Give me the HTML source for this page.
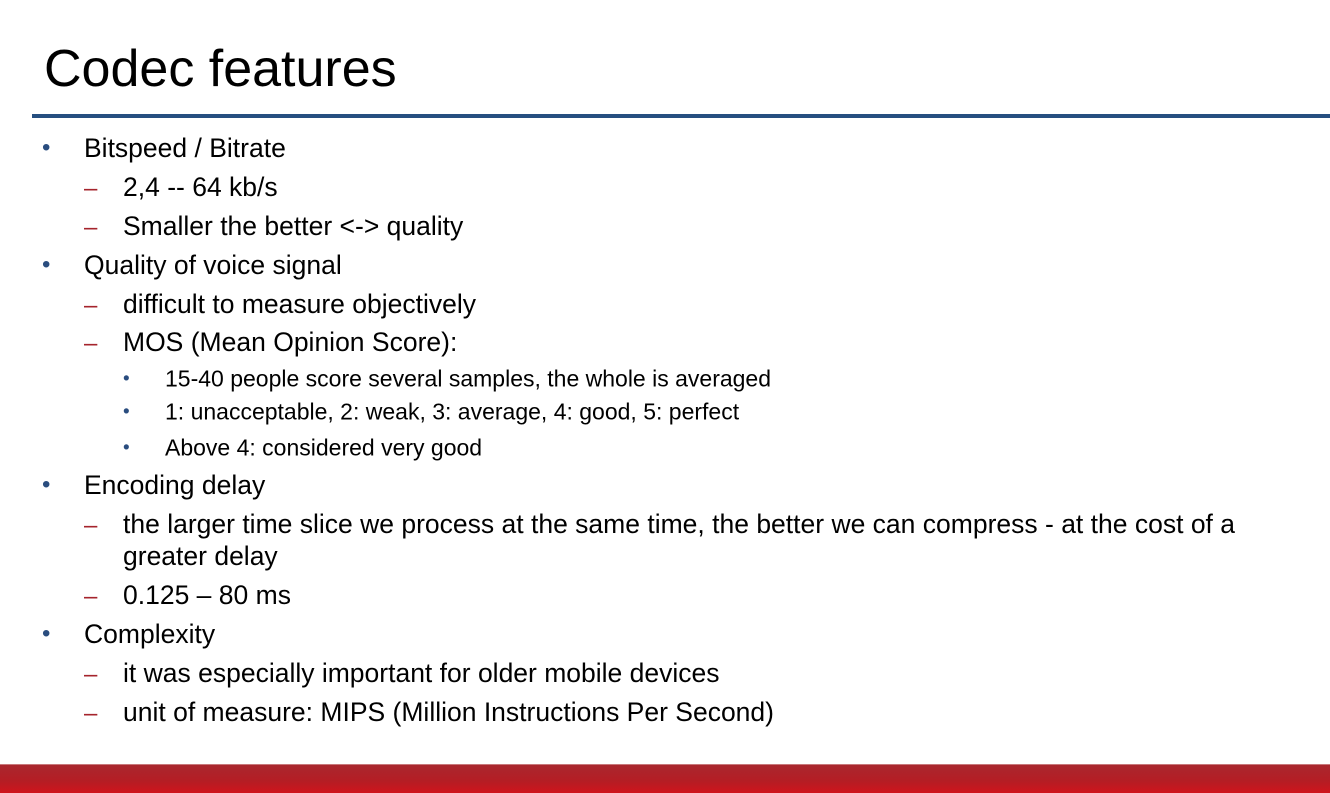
<!DOCTYPE html>
<html><head><meta charset="utf-8"><style>
body{margin:0;width:1330px;height:793px;position:relative;overflow:hidden;background:#fff;font-family:"Liberation Sans",sans-serif;color:#000}
.l{position:absolute;white-space:nowrap;line-height:1;transform:translateY(-50%)}
.t{left:44px;top:69px;font-size:52px}
.a,.b{font-size:26.5px}
.c{font-size:23px}
.bu{color:#2a4d7f;font-size:24px}
.da{color:#a5242c;font-size:24px;margin-top:2px}
</style></head><body>
<div class="l t">Codec features</div>
<div style="position:absolute;left:32px;top:114px;width:1298px;height:4px;background:#264f80"></div>

<div class="l bu" style="left:42px;top:148px">•</div><div class="l a" style="left:84px;top:148px">Bitspeed / Bitrate</div>
<div class="l da" style="left:84px;top:187px">–</div><div class="l b" style="left:123px;top:187px">2,4 -- 64 kb/s</div>
<div class="l da" style="left:84px;top:226px">–</div><div class="l b" style="left:123px;top:226px">Smaller the better &lt;-&gt; quality</div>
<div class="l bu" style="left:42px;top:265px">•</div><div class="l a" style="left:84px;top:265px">Quality of voice signal</div>
<div class="l da" style="left:84px;top:304px">–</div><div class="l b" style="left:123px;top:304px">difficult to measure objectively</div>
<div class="l da" style="left:84px;top:342px">–</div><div class="l b" style="left:123px;top:342px">MOS (Mean Opinion Score):</div>
<div class="l bu" style="left:123px;top:379px;font-size:19px">•</div><div class="l c" style="left:165px;top:379px">15-40 people score several samples, the whole is averaged</div>
<div class="l bu" style="left:123px;top:412px;font-size:19px">•</div><div class="l c" style="left:165px;top:412px">1: unacceptable, 2: weak, 3: average, 4: good, 5: perfect</div>
<div class="l bu" style="left:123px;top:448px;font-size:19px">•</div><div class="l c" style="left:165px;top:448px">Above 4: considered very good</div>
<div class="l bu" style="left:42px;top:485px">•</div><div class="l a" style="left:84px;top:485px">Encoding delay</div>
<div class="l da" style="left:84px;top:524px">–</div><div class="l b" style="left:123px;top:524px">the larger time slice we process at the same time, the better we can compress - at the cost of a</div>
<div class="l b" style="left:123px;top:556px">greater delay</div>
<div class="l da" style="left:84px;top:595px">–</div><div class="l b" style="left:123px;top:595px">0.125 – 80 ms</div>
<div class="l bu" style="left:42px;top:634px">•</div><div class="l a" style="left:84px;top:634px">Complexity</div>
<div class="l da" style="left:84px;top:673px">–</div><div class="l b" style="left:123px;top:673px">it was especially important for older mobile devices</div>
<div class="l da" style="left:84px;top:712px">–</div><div class="l b" style="left:123px;top:712px">unit of measure: MIPS (Million Instructions Per Second)</div>

<div style="position:absolute;left:0;top:764px;width:1330px;height:29px;background:linear-gradient(#a8282f,#b51d24 60%,#d0141c)"></div>
<div style="position:absolute;left:0;top:764px;width:1330px;height:1px;background:#c8777a"></div>
</body></html>
